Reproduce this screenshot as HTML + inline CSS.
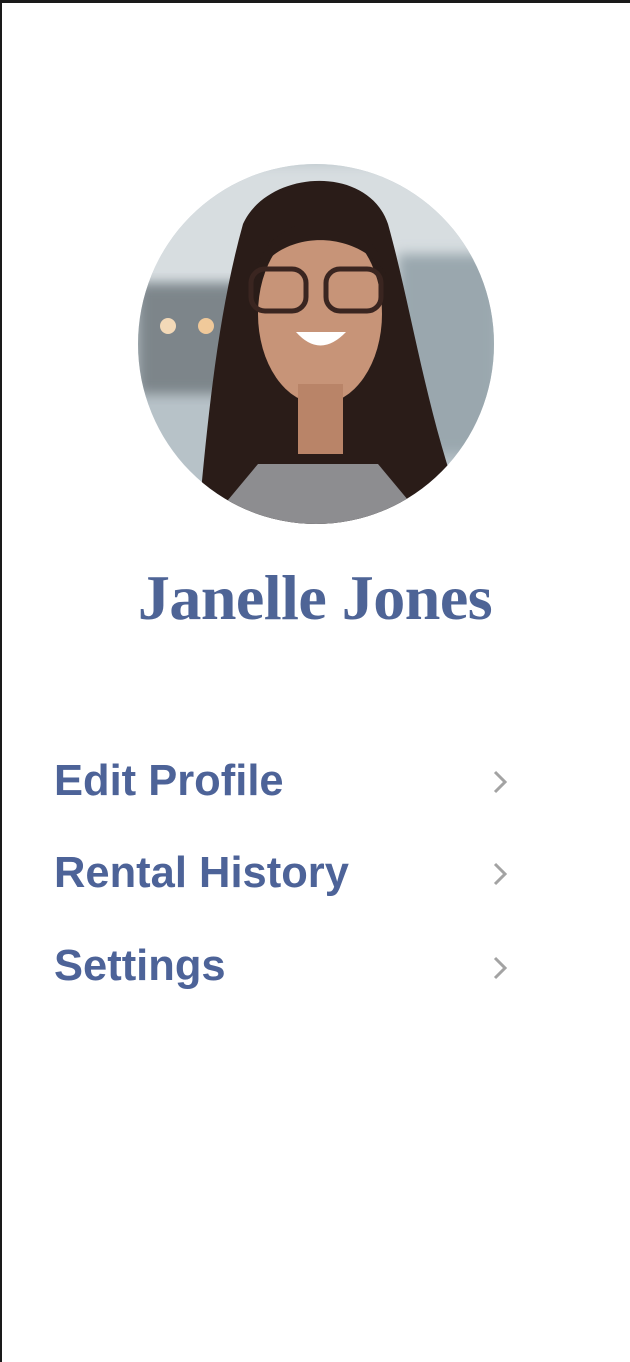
<!DOCTYPE html>
<html><head><style>
body{margin:0;width:630px;height:1362px;background:#fff;position:relative;overflow:hidden;font-family:"Liberation Sans",sans-serif}
.top{position:absolute;left:0;top:0;width:630px;height:3px;background:#1a1a1a}
.left{position:absolute;left:0;top:0;width:2px;height:1362px;background:#1a1a1a}
.name{position:absolute;left:0;width:630px;top:561px;text-align:center;font-family:"Liberation Serif",serif;font-weight:bold;font-size:64px;color:#4e6496;letter-spacing:-0.5px}
.item{position:absolute;left:54px;font-weight:bold;font-size:43.5px;color:#4d6398;line-height:1}
.chev{position:absolute;left:491px}
</style></head><body>
<div class="top"></div><div class="left"></div>
<svg style="position:absolute;left:138px;top:164px" width="357" height="360" viewBox="0 0 357 360">
<defs><clipPath id="c"><ellipse cx="178" cy="180" rx="178" ry="180"/></clipPath>
<filter id="b"><feGaussianBlur stdDeviation="6"/></filter></defs>
<g clip-path="url(#c)">
<rect width="357" height="360" fill="#b7c2c8"/>
<rect x="0" y="0" width="357" height="120" fill="#d7dde0" filter="url(#b)"/>
<rect x="0" y="120" width="120" height="110" fill="#7d858a" filter="url(#b)"/>
<rect x="260" y="90" width="100" height="200" fill="#9aa7ae" filter="url(#b)"/>
<circle cx="30" cy="162" r="8" fill="#f3d9b8"/><circle cx="68" cy="162" r="8" fill="#f0c99a"/>
<path d="M60 360 C70 250 80 150 105 60 C130 5 230 0 250 60 C275 150 290 260 330 360 Z" fill="#2a1c18"/>
<path d="M120 300 L240 300 L290 360 L70 360 Z" fill="#8d8d90"/>
<ellipse cx="182" cy="150" rx="62" ry="90" fill="#c79478"/>
<rect x="160" y="220" width="45" height="70" fill="#b98468"/>
<path d="M118 110 C130 40 235 40 248 110 C225 70 150 60 118 110Z" fill="#2a1c18"/>
<rect x="113" y="105" width="55" height="42" rx="14" fill="none" stroke="#3a2520" stroke-width="5"/>
<rect x="188" y="105" width="55" height="42" rx="14" fill="none" stroke="#3a2520" stroke-width="5"/>
<path d="M158 168 Q182 195 208 168 Z" fill="#fff"/>
</g></svg>
<div class="name">Janelle Jones</div>
<div class="item" style="top:760px">Edit Profile</div>
<div class="item" style="top:852px">Rental History</div>
<div class="item" style="top:945px">Settings</div>
<svg class="chev" style="top:769px" width="18" height="26"><path d="M4 3 L14 13 L4 23" fill="none" stroke="#a3a3a3" stroke-width="3"/></svg>
<svg class="chev" style="top:861px" width="18" height="26"><path d="M4 3 L14 13 L4 23" fill="none" stroke="#a3a3a3" stroke-width="3"/></svg>
<svg class="chev" style="top:955px" width="18" height="26"><path d="M4 3 L14 13 L4 23" fill="none" stroke="#a3a3a3" stroke-width="3"/></svg>
</body></html>
